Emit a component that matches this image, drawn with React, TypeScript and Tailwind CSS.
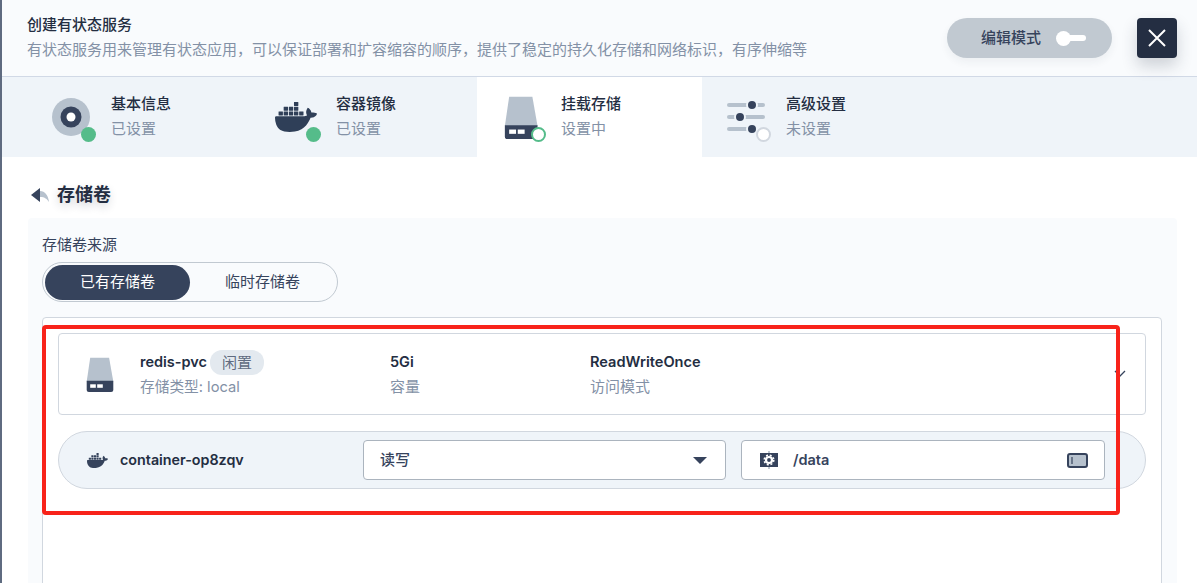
import React from "react";
import { SiDocker } from "react-icons/si";

const font = { fontFamily: '"Inter","Noto Sans CJK SC",sans-serif' };

function Disk({ size = 1 }: { size?: number }) {
  return (
    <svg width={40 * size} height={50 * size} viewBox="0 0 40 50">
      <path d="M6 1h27l6 34H1z" fill="#b6c1cd" />
      <path d="M1 34h38v13a3 3 0 0 1-3 3H4a3 3 0 0 1-3-3z" fill="#36435c" />
      <rect x="6" y="39" width="8" height="5" fill="#fff" />
      <rect x="16" y="39" width="8" height="5" fill="#fff" />
    </svg>
  );
}

function Sliders() {
  return (
    <svg width="38" height="36" viewBox="0 0 38 36">
      <g fill="#b6c1cd">
        <rect x="0" y="4" width="38" height="4" rx="2" />
        <rect x="0" y="16" width="38" height="4" rx="2" />
        <rect x="0" y="28" width="30" height="4" rx="2" />
      </g>
      <g stroke="#eff4f9" strokeWidth="2">
        <circle cx="25" cy="6" r="5" fill="#36435c" />
        <circle cx="13" cy="18" r="5" fill="#36435c" />
        <circle cx="25" cy="30" r="5" fill="#36435c" />
      </g>
    </svg>
  );
}

function Step({
  icon, title, sub, dot, active, width, pad,
}: {
  icon: React.ReactNode; title: string; sub: string; dot: string; active?: boolean; width: string; pad: string;
}) {
  return (
    <div className={`flex h-full items-center ${width} ${pad} ${active ? "bg-white" : ""}`}>
      <div className="relative mr-[18px] flex h-[44px] w-[44px] shrink-0 items-center justify-center">
        {icon}
        <span className={dot} />
      </div>
      <div className="-mt-[2px]">
        <div className="text-[15px] leading-[20px] font-medium text-[#242e42]">{title}</div>
        <div className="mt-[5px] text-[15px] leading-[20px] text-[#8391a6]">{sub}</div>
      </div>
    </div>
  );
}

export default function App() {
  return (
    <div className="relative h-[583px] w-[1197px] overflow-hidden border-l-2 border-[#5f6b80] bg-white" style={font}>
      <header className="flex h-[77px] items-start justify-between border-b border-[#d1d9e6] bg-[#f9fbfd] pl-[25px]">
        <div className="pt-[15px]">
          <div className="text-[15px] leading-[20px] font-medium text-[#242e42]">创建有状态服务</div>
          <div className="mt-[5px] text-[15px] leading-[20px] text-[#8391a6]">
            有状态服务用来管理有状态应用，可以保证部署和扩容缩容的顺序，提供了稳定的持久化存储和网络标识，有序伸缩等
          </div>
        </div>
        <div className="mr-[20px] flex items-center gap-[25px] pt-[18px]">
          <div className="flex h-[40px] w-[165px] items-center rounded-[20px] bg-[#c1c9d1] pl-[34px] shadow-[0_4px_8px_rgba(36,46,66,0.06)]">
            <span className="text-[15px] font-medium text-[#36435c]">编辑模式</span>
            <span className="ml-[15px] flex items-center">
              <span className="h-[15px] w-[15px] rounded-full bg-white" />
              <span className="-ml-[1px] h-[6px] w-[16px] rounded-r-full bg-white" />
            </span>
          </div>
          <div className="flex h-[40px] w-[40px] items-center justify-center rounded-[4px] bg-[#242e42] shadow-[0_8px_16px_rgba(36,46,66,0.2)]">
            <svg width="20" height="20" viewBox="0 0 20 20">
              <path d="M2 2l16 16M18 2L2 18" stroke="#fff" strokeWidth="2" />
            </svg>
          </div>
        </div>
      </header>

      <nav className="flex h-[80px] bg-[#eff4f9]">
        <Step
          width="w-[250px]" pad="pl-[47px]" title="基本信息" sub="已设置"
          dot="absolute right-[-3px] bottom-[-3px] h-[15px] w-[15px] rounded-full bg-[#55bc8a]"
          icon={
            <svg width="38" height="38" viewBox="0 0 38 38">
              <circle cx="19" cy="19" r="19" fill="#b6c1cd" />
              <circle cx="19" cy="19" r="10.5" fill="#36435c" />
              <circle cx="19" cy="19" r="4.5" fill="#fff" />
            </svg>
          }
        />
        <Step
          width="w-[225px]" pad="pl-[22px]" title="容器镜像" sub="已设置"
          dot="absolute right-[-3px] bottom-[-3px] h-[15px] w-[15px] rounded-full bg-[#55bc8a]"
          icon={<SiDocker size={42} color="#2f3f58" />}
        />
        <Step
          active width="w-[225px]" pad="pl-[22px]" title="挂载存储" sub="设置中"
          dot="absolute right-[-3px] bottom-[-3px] h-[15px] w-[15px] rounded-full border-2 border-[#55bc8a] bg-white"
          icon={<Disk size={0.86} />}
        />
        <Step
          width="w-[225px]" pad="pl-[22px]" title="高级设置" sub="未设置"
          dot="absolute right-[-3px] bottom-[-3px] h-[15px] w-[15px] rounded-full border-2 border-[#d1d7df] bg-white"
          icon={<Sliders />}
        />
      </nav>

      <section className="pl-[26px] pr-[20px]">
        <div className="flex h-[61px] items-center gap-[7px] pt-[14px]">
          <svg width="20" height="16" viewBox="0 0 20 16" className="ml-[2px]">
            <path d="M1 8l9-7v14z" fill="#36435c" />
            <path d="M10 4c5 0 8 4 9 11-2-3-4-5-9-5z" fill="#b6c1cd" />
          </svg>
          <span className="text-[18px] font-bold text-[#242e42] [text-shadow:0_4px_8px_rgba(36,46,66,0.2)]">存储卷</span>
        </div>

        <div className="h-[365px] rounded-t-[4px] bg-[#f9fbfd] pl-[14px] pr-[15px] pt-[17px]">
          <div className="text-[15px] leading-[20px] text-[#36435c]">存储卷来源</div>
          <div className="mt-[7px] flex h-[40px] w-[296px] items-center rounded-[20px] border border-[#c1c9d1] p-[2px]">
            <div className="flex h-[35px] w-[146px] items-center justify-center rounded-[18px] bg-[#36435c] text-[15px] text-white">已有存储卷</div>
            <div className="flex h-[35px] w-[146px] items-center justify-center text-[15px] text-[#36435c]">临时存储卷</div>
          </div>

          <div className="mt-[15px] h-[300px] rounded-t-[4px] border border-[#d1d7df] bg-white px-[15px] pt-[15px]">
            <div className="flex h-[82px] items-center rounded-[4px] border border-[#d1d7df] bg-white pl-[27px] pr-[19px]">
              <Disk size={0.7} />
              <div className="ml-[26px] w-[250px] -mt-[1px]">
                <div className="flex h-[24px] items-center gap-[3px]">
                  <span className="text-[14.5px] font-semibold text-[#242e42]">redis-pvc</span>
                  <span className="rounded-[12px] bg-[#e3e9ef] px-[12px] text-[15px] leading-[25px] text-[#5f6b80]">闲置</span>
                </div>
                <div className="mt-[3px] text-[14.7px] leading-[20px] text-[#8391a6]">存储类型: local</div>
              </div>
              <div className="w-[200px] -mt-[1px]">
                <div className="text-[14.5px] leading-[24px] font-semibold text-[#242e42]">5Gi</div>
                <div className="mt-[3px] text-[15px] leading-[20px] text-[#8391a6]">容量</div>
              </div>
              <div className="flex-1 -mt-[1px]">
                <div className="text-[14.6px] leading-[24px] font-semibold text-[#242e42]">ReadWriteOnce</div>
                <div className="mt-[3px] text-[15px] leading-[20px] text-[#8391a6]">访问模式</div>
              </div>
              <svg width="12" height="8" viewBox="0 0 12 8">
                <path d="M1 1l5 5 5-5" fill="none" stroke="#36435c" strokeWidth="1.3" />
              </svg>
            </div>

            <div className="mt-[16px] flex h-[58px] items-center rounded-[30px] border border-[#d1d7df] bg-[#eff4f9] pl-[28px]">
              <SiDocker size={21} color="#36435c" className="shrink-0" />
              <span className="ml-[12px] w-[243px] shrink-0 text-[14.3px] font-semibold text-[#242e42]">container-op8zqv</span>
              <div className="flex h-[40px] w-[363px] shrink-0 items-center justify-between rounded-[4px] border border-[#abb4be] bg-white px-[16px] text-[15px] font-medium text-[#36435c]">
                <span>读写</span>
                <span className="mr-[2px] h-0 w-0 border-x-[7px] border-t-[7px] border-x-transparent border-t-[#36435c]" />
              </div>
              <div className="ml-[15px] flex h-[40px] w-[364px] shrink-0 items-center rounded-[4px] border border-[#abb4be] bg-white pl-[17px] pr-[16px]">
                <svg width="20" height="20" viewBox="0 0 20 20">
                  <rect x="1" y="3" width="18" height="14" fill="#36435c" />
                  <rect x="9" y="1" width="2" height="18" fill="#c1c9d1" />
                  <rect x="9" y="3" width="2" height="14" fill="#36435c" />
                  <circle cx="10" cy="10" r="3" fill="none" stroke="#fff" strokeWidth="2.2" />
                  <circle cx="10" cy="10" r="4.8" fill="none" stroke="#fff" strokeWidth="1.5" strokeDasharray="2 1.8" />
                </svg>
                <span className="ml-[14px] flex-1 text-[14.5px] font-semibold text-[#36435c]">/data</span>
                <svg width="21" height="15" viewBox="0 0 21 15">
                  <rect x="1" y="1" width="19" height="13" rx="2" fill="#b6c1cd" stroke="#36435c" strokeWidth="2" />
                  <path d="M5 4v7" stroke="#36435c" strokeWidth="1.2" />
                </svg>
              </div>
            </div>
          </div>
        </div>
      </section>

      <div className="pointer-events-none absolute left-[40px] top-[325px] h-[190px] w-[1078px] rounded-[4px] border-4 border-[#f8231a]" />
    </div>
  );
}
